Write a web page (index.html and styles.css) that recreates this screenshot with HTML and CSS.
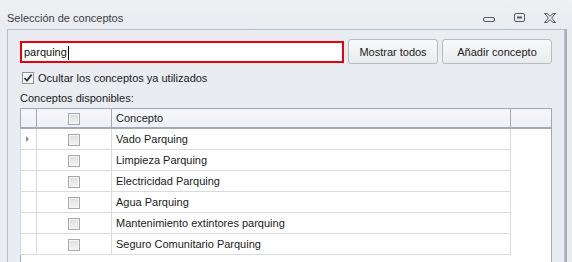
FILE: index.html
```html
<!DOCTYPE html>
<html lang="es">

<head>
    <meta charset="UTF-8">
    <title>Selección de conceptos</title>
    <link rel="stylesheet" href="styles.css">
</head>

<body>
    <div class="window">
        <div class="titlebar">
            <span class="title">Selección de conceptos</span>
            <div class="controls">
                <svg class="ctl ctl-min" width="12" height="5" viewBox="0 0 12 5">
                    <rect x="0.5" y="0.5" width="11" height="4" rx="1.5" fill="none" stroke="#555b63" />
                </svg>
                <svg class="ctl ctl-max" width="11" height="9" viewBox="0 0 11 9">
                    <rect x="0.5" y="0.5" width="10" height="8" rx="1.5" fill="none" stroke="#555b63" />
                    <rect x="3" y="3.5" width="5" height="2" fill="#555b63" />
                </svg>
                <svg class="ctl ctl-close" width="12" height="10" viewBox="0 0 12 10">
                    <path d="M0.5 0.5 H3 L6 3.3 L9 0.5 H11.5 L7.6 5 L11.5 9.5 H9 L6 6.7 L3 9.5 H0.5 L4.4 5 Z" fill="none" stroke="#555b63" stroke-linejoin="round" />
                </svg>
            </div>
        </div>

        <div class="panel">
            <div class="search-row">
                <div class="search-box">parquing<span class="caret"></span></div>
                <button class="btn btn-all">Mostrar todos</button>
                <button class="btn btn-add">Añadir concepto</button>
            </div>

            <label class="hide-used">
                <svg class="check" width="12" height="12" viewBox="0 0 12 12">
                    <rect x="0.5" y="0.5" width="11" height="11" fill="#f4f4f4" stroke="#8d939b" />
                    <path d="M2.5 6 L5 8.6 L9.6 2.6" fill="none" stroke="#333" stroke-width="1.8" />
                </svg>
                Ocultar los conceptos ya utilizados
            </label>

            <div class="list-label">Conceptos disponibles:</div>

            <table class="grid">
                <colgroup>
                    <col class="w-ind">
                    <col class="w-sel">
                    <col class="w-name">
                    <col class="w-extra">
                </colgroup>
                <thead>
                    <tr>
                        <th class="col-ind"></th>
                        <th class="col-sel"><span class="box"></span></th>
                        <th class="col-name">Concepto</th>
                        <th class="col-extra"></th>
                    </tr>
                </thead>
                <tbody>
                    <tr>
                        <td class="col-ind"><span class="arrow"></span></td>
                        <td class="col-sel"><span class="box"></span></td>
                        <td class="col-name">Vado Parquing</td>
                        <td class="col-extra"></td>
                    </tr>
                    <tr>
                        <td class="col-ind"></td>
                        <td class="col-sel"><span class="box"></span></td>
                        <td class="col-name">Limpieza Parquing</td>
                        <td class="col-extra"></td>
                    </tr>
                    <tr>
                        <td class="col-ind"></td>
                        <td class="col-sel"><span class="box"></span></td>
                        <td class="col-name">Electricidad Parquing</td>
                        <td class="col-extra"></td>
                    </tr>
                    <tr>
                        <td class="col-ind"></td>
                        <td class="col-sel"><span class="box"></span></td>
                        <td class="col-name">Agua Parquing</td>
                        <td class="col-extra"></td>
                    </tr>
                    <tr>
                        <td class="col-ind"></td>
                        <td class="col-sel"><span class="box"></span></td>
                        <td class="col-name">Mantenimiento extintores parquing</td>
                        <td class="col-extra"></td>
                    </tr>
                    <tr>
                        <td class="col-ind"></td>
                        <td class="col-sel"><span class="box"></span></td>
                        <td class="col-name">Seguro Comunitario Parquing</td>
                        <td class="col-extra"></td>
                    </tr>
                    <tr class="filler">
                        <td></td>
                        <td></td>
                        <td></td>
                        <td></td>
                    </tr>
                </tbody>
            </table>
        </div>
    </div>
</body>

</html>
```

FILE: styles.css
```css
body {
    margin: 0;
    background-color: #e9ecf0;
    font-family: "Liberation Sans", Arial, sans-serif;
    font-size: 11px;
    color: #1b1b1b;
}

.window {
    width: 572px;
    height: 262px;
    overflow: hidden;
    background-color: #e9ecf0;
}

.titlebar {
    display: flex;
    align-items: center;
    height: 29px;
    padding-left: 7px;
    background: linear-gradient(#eef0f3, #e9ecf0);
}

.title {
    font-size: 11px;
    color: #3a3d42;
    padding-top: 6px;
}

.controls {
    margin-left: auto;
    display: flex;
    align-items: center;
    gap: 19px;
    padding-right: 16px;
    padding-top: 6px;
}

.ctl-min {
    margin-top: 3px;
}

.panel {
    margin-left: 7px;
    width: 532px;
    height: 240px;
    border-left: 1px solid #b9bfc8;
    border-right: 1px solid #b9bfc8;
    border-top: 1px solid #b9bfc8;
    padding: 9px 12px 0 12px;
    box-shadow: 2px 0 0 #a9afb8;
}

.search-row {
    display: flex;
    align-items: center;
    gap: 4px;
}

.search-box {
    width: 318px;
    height: 18px;
    line-height: 18px;
    border: 2px solid #e8000b;
    background-color: #fff;
    padding-left: 2px;
    font-size: 11px;
    color: #111;
}

.caret {
    display: inline-block;
    width: 1px;
    height: 14px;
    background-color: #000;
    vertical-align: middle;
    margin-left: 1px;
}

.btn {
    height: 25px;
    margin: 0;
    padding: 0;
    border: 1px solid #b7bcc4;
    border-radius: 3px;
    background: linear-gradient(#f7f8fa, #e9ecef);
    font-family: inherit;
    font-size: 11px;
    color: #222;
}

.btn-all {
    width: 90px;
}

.btn-add {
    width: 110px;
}

.hide-used {
    display: flex;
    align-items: center;
    gap: 4px;
    margin-top: 7px;
    margin-left: 2px;
    height: 14px;
}

.list-label {
    margin-top: 6px;
    height: 14px;
    line-height: 14px;
}

.grid {
    margin-top: 3px;
    width: 531px;
    border-collapse: collapse;
    table-layout: fixed;
    background-color: #fff;
    border: 1px solid #a3aab3;
}

.w-ind {
    width: 16px;
}

.w-sel {
    width: 75px;
}

.w-name {
    width: 399px;
}

.w-extra {
    width: 41px;
}

.grid th,
.grid td {
    padding: 0;
    height: 20px;
    font-weight: normal;
    text-align: left;
    font-size: 11px;
}

.grid th {
    height: 18px;
    background: linear-gradient(#f5f7fa, #edf0f4);
    border-left: 1px solid #a3aab3;
    border-bottom: 2px solid #a3aab3;
}

.grid td {
    border-left: 1px solid #d9dbde;
    border-bottom: 1px solid #d9dbde;
}

.grid .col-ind {
    position: relative;
}

.grid .col-sel {
    text-align: center;
}

.grid .col-name {
    padding-left: 4px;
}

.grid td.col-extra {
    border-bottom: none;
}

.grid .filler td {
    border: none;
    height: 30px;
}

.box {
    display: inline-block;
    width: 10px;
    height: 10px;
    vertical-align: middle;
    border: 1px solid #a4a9b0;
    background: linear-gradient(#dedede, #f3f3f3);
    box-shadow: inset 0 0 0 1px #f5f5f5;
}

.arrow {
    position: absolute;
    left: 5px;
    top: 7px;
    width: 0;
    height: 0;
    border-top: 3px solid transparent;
    border-bottom: 3px solid transparent;
    border-left: 3px solid #8c9096;
}
```
